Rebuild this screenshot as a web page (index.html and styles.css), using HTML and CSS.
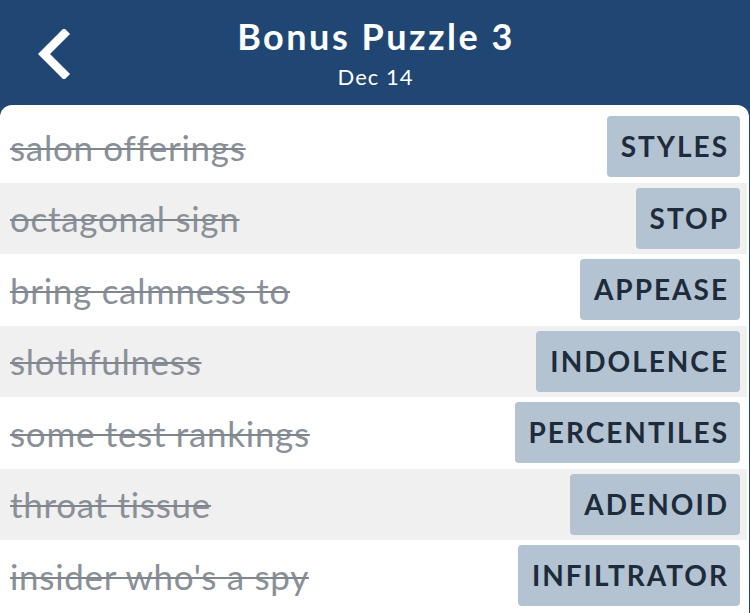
FILE: index.html
```html
<!DOCTYPE html>
<html lang="en">
<head>
<meta charset="UTF-8">
<meta name="viewport" content="width=device-width, initial-scale=1.0">
<title>Bonus Puzzle 3</title>
<link rel="stylesheet" href="styles.css">
</head>
<body>

<header class="top">
  <a class="back" href="#">
    <svg width="36" height="50" viewBox="0 0 36 50">
      <path d="M29 5 L9 25 L29 45" fill="none" stroke="#fff" stroke-width="8.5" stroke-linecap="square"/>
    </svg>
  </a>
  <div class="title">
    <h1>Bonus Puzzle 3</h1>
    <p>Dec 14</p>
  </div>
</header>

<main class="card">
  <div class="row"><span class="clue">salon offerings</span><span class="answer">STYLES</span></div>
  <div class="row"><span class="clue">octagonal sign</span><span class="answer">STOP</span></div>
  <div class="row"><span class="clue">bring calmness to</span><span class="answer">APPEASE</span></div>
  <div class="row"><span class="clue">slothfulness</span><span class="answer">INDOLENCE</span></div>
  <div class="row"><span class="clue">some test rankings</span><span class="answer">PERCENTILES</span></div>
  <div class="row"><span class="clue">throat tissue</span><span class="answer">ADENOID</span></div>
  <div class="row"><span class="clue">insider who's a spy</span><span class="answer">INFILTRATOR</span></div>
</main>

</body>
</html>
```

FILE: styles.css
```css
body {
  margin: 0;
  font-family: Lato, "Noto Sans", sans-serif;
  background: #204673;
  overflow: hidden;
}

/* Header */
.top {
  height: 105px;
  position: relative;
  display: flex;
  justify-content: center;
  color: #fff;
}
.back { position: absolute; left: 35px; top: 29px; }
.title { text-align: center; padding-top: 14px; }
.title h1 {
  margin: 0 0 0 2px;
  font-size: 36px;
  font-weight: 700;
  line-height: 44px;
  letter-spacing: 2.5px;
}
.title p {
  margin: 6px 0 0 1px;
  font-size: 22px;
  line-height: 26px;
  letter-spacing: 1px;
}

/* List */
.card {
  background: #fff;
  border-radius: 12px 12px 0 0;
  margin-right: 1px;
  padding: 6px 2px 0 0;
  height: 520px;
}
.row {
  height: 71.5px;
  display: flex;
  align-items: center;
  justify-content: space-between;
  padding: 0 7px 0 10px;
}
.row:nth-child(even) { background: #f0f0f0; }
.clue {
  font-size: 35px;
  letter-spacing: 0.7px;
  color: #8a9098;
  text-decoration: line-through;
  text-decoration-thickness: 2px;
  text-decoration-color: #7f868e;
}
.answer {
  background: #b3c3d1;
  color: #1d2b3b;
  font-size: 28px;
  font-weight: 700;
  letter-spacing: 2px;
  border-radius: 4px;
  height: 61px;
  line-height: 61px;
  padding: 0 11px 0 14px;
}
```
